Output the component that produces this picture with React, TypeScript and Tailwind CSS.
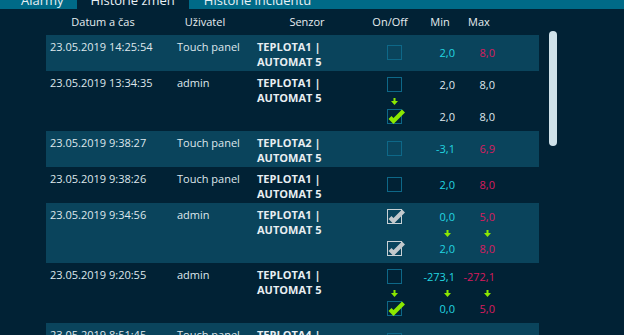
import React from 'react';

type Box = 'empty' | 'green' | 'gray';

type Row = {
  date: string;
  user: string;
  sensor: string;
  hl: boolean;
  on: Box[];
  min: string[];
  max: string[];
  plain?: boolean;
};

const rows: Row[] = [
  { date: '23.05.2019 14:25:54', user: 'Touch panel', sensor: 'TEPLOTA1', hl: true, on: ['empty'], min: ['2,0'], max: ['8,0'] },
  { date: '23.05.2019 13:34:35', user: 'admin', sensor: 'TEPLOTA1', hl: false, on: ['empty', 'green'], min: ['2,0', '2,0'], max: ['8,0', '8,0'], plain: true },
  { date: '23.05.2019 9:38:27', user: 'Touch panel', sensor: 'TEPLOTA2', hl: true, on: ['empty'], min: ['-3,1'], max: ['6,9'] },
  { date: '23.05.2019 9:38:26', user: 'Touch panel', sensor: 'TEPLOTA1', hl: false, on: ['empty'], min: ['2,0'], max: ['8,0'] },
  { date: '23.05.2019 9:34:56', user: 'admin', sensor: 'TEPLOTA1', hl: true, on: ['gray', 'gray'], min: ['0,0', '2,0'], max: ['5,0', '8,0'] },
  { date: '23.05.2019 9:20:55', user: 'admin', sensor: 'TEPLOTA1', hl: false, on: ['empty', 'green'], min: ['-273,1', '0,0'], max: ['-272,1', '5,0'] },
  { date: '23.05.2019 8:51:45', user: 'Touch panel', sensor: 'TEPLOTA4', hl: true, on: ['empty'], min: ['2,0'], max: ['8,0'] },
];

function Arrow() {
  return (
    <svg width="7" height="7" viewBox="0 0 7 7">
      <path d="M2.5 0 H4.5 V3 H7 L3.5 7 L0 3 H2.5 Z" fill="#8ce800" />
    </svg>
  );
}

function Check({ kind }: { kind: Box }) {
  const border =
    kind === 'gray' ? 'border-[#c9d1d5]' : 'border-[#0e6888]';
  return (
    <div className="relative w-[15px] h-[15px] -mt-[2px]">
      <div className={`w-[15px] h-[15px] border ${border}`} />
      {kind !== 'empty' && (
        <svg className="absolute left-0 top-0 overflow-visible" width="15" height="15" viewBox="0 0 15 15">
          <path
            d="M3 8.5 L6.5 12 L16.5 2"
            fill="none"
            stroke={kind === 'gray' ? '#c3c9cc' : '#8ce800'}
            strokeWidth="4.2"
          />
        </svg>
      )}
    </div>
  );
}

function Value({ v, color }: { v: string; color: string }) {
  return <span className={color}>{v}</span>;
}

function ValueCol({ vals, kind, plain }: { vals: string[]; kind: 'min' | 'max'; plain?: boolean }) {
  const color = plain ? 'text-[#dfe7ec]' : kind === 'min' ? 'text-[#22d6e0]' : 'text-[#d81b5e]';
  if (vals.length === 1) {
    return (
      <div className="w-[40px] flex items-center justify-end">
        <Value v={vals[0]} color={color} />
      </div>
    );
  }
  const changed = vals[0] !== vals[1];
  return (
    <div className="w-[40px] flex flex-col items-end pt-[2px]">
      <div className="h-[24px] flex items-center">
        <Value v={vals[0]} color={color} />
      </div>
      <div className="h-[8px] w-[16px] flex items-center justify-center">{changed && <Arrow />}</div>
      <div className="h-[24px] flex items-center">
        <Value v={vals[1]} color={color} />
      </div>
    </div>
  );
}

function OnCol({ on }: { on: Box[] }) {
  if (on.length === 1) {
    return (
      <div className="w-[28px] flex items-center">
        <Check kind={on[0]} />
      </div>
    );
  }
  return (
    <div className="w-[28px] flex flex-col pt-[2px]">
      <div className="h-[24px] flex items-center">
        <Check kind={on[0]} />
      </div>
      <div className="h-[8px] w-[15px] flex items-center justify-center">{on[0] !== on[1] && <Arrow />}</div>
      <div className="h-[24px] flex items-center">
        <Check kind={on[1]} />
      </div>
    </div>
  );
}

export default function App() {
  return (
    <div className="w-[624px] h-[335px] overflow-hidden bg-[#012235] font-['Open_Sans','Noto_Sans',sans-serif] text-[11px]">
      <div className="h-[9px] bg-[#006a87] flex overflow-hidden pl-[8px] text-[13px] text-[#e8f0f4]">
        <div className="px-[13px]">
          <span className="block -mt-[9px] leading-[18px]">Alarmy</span>
        </div>
        <div className="px-[14px] bg-[#012235]">
          <span className="block -mt-[9px] leading-[18px]">Historie změn</span>
        </div>
        <div className="px-[15px]">
          <span className="block -mt-[9px] leading-[18px]">Historie incidentů</span>
        </div>
      </div>

      <div className="flex">
        <div className="ml-[46px] w-[493px]">
          <div className="h-[26px] flex items-center text-[#e6edf0]">
            <div className="w-[114px] text-center">Datum a čas</div>
            <div className="w-[90px] text-center">Uživatel</div>
            <div className="w-[114px] text-center">Senzor</div>
            <div className="w-[52px] text-center">On/Off</div>
            <div className="w-[48px] text-center">Min</div>
            <div className="w-[30px] text-center">Max</div>
          </div>

          {rows.map((r, i) => (
            <div
              key={i}
              className={`flex ${r.on.length > 1 ? 'h-[60px]' : 'h-[36px]'} ${r.hl ? 'bg-[#0a445c]' : ''}`}
            >
              <div className="w-[131px] pl-[4px] pt-[4px] leading-[15px] text-[#dfe7ec]">{r.date}</div>
              <div className="w-[80px] pt-[4px] leading-[15px] text-[#dfe7ec]">{r.user}</div>
              <div className="w-[130px] pt-[4px] leading-[15px] font-bold text-[#e8eef2]">
                <div>{r.sensor} |</div>
                <div>AUTOMAT 5</div>
              </div>
              <OnCol on={r.on} />
              <ValueCol vals={r.min} kind="min" plain={r.plain} />
              <ValueCol vals={r.max} kind="max" plain={r.plain} />
            </div>
          ))}
        </div>

        <div className="ml-[10px] w-[8px]">
          <div className="mt-[22px] h-[115px] rounded-full bg-[#cfe2ea]" />
        </div>
      </div>
    </div>
  );
}
